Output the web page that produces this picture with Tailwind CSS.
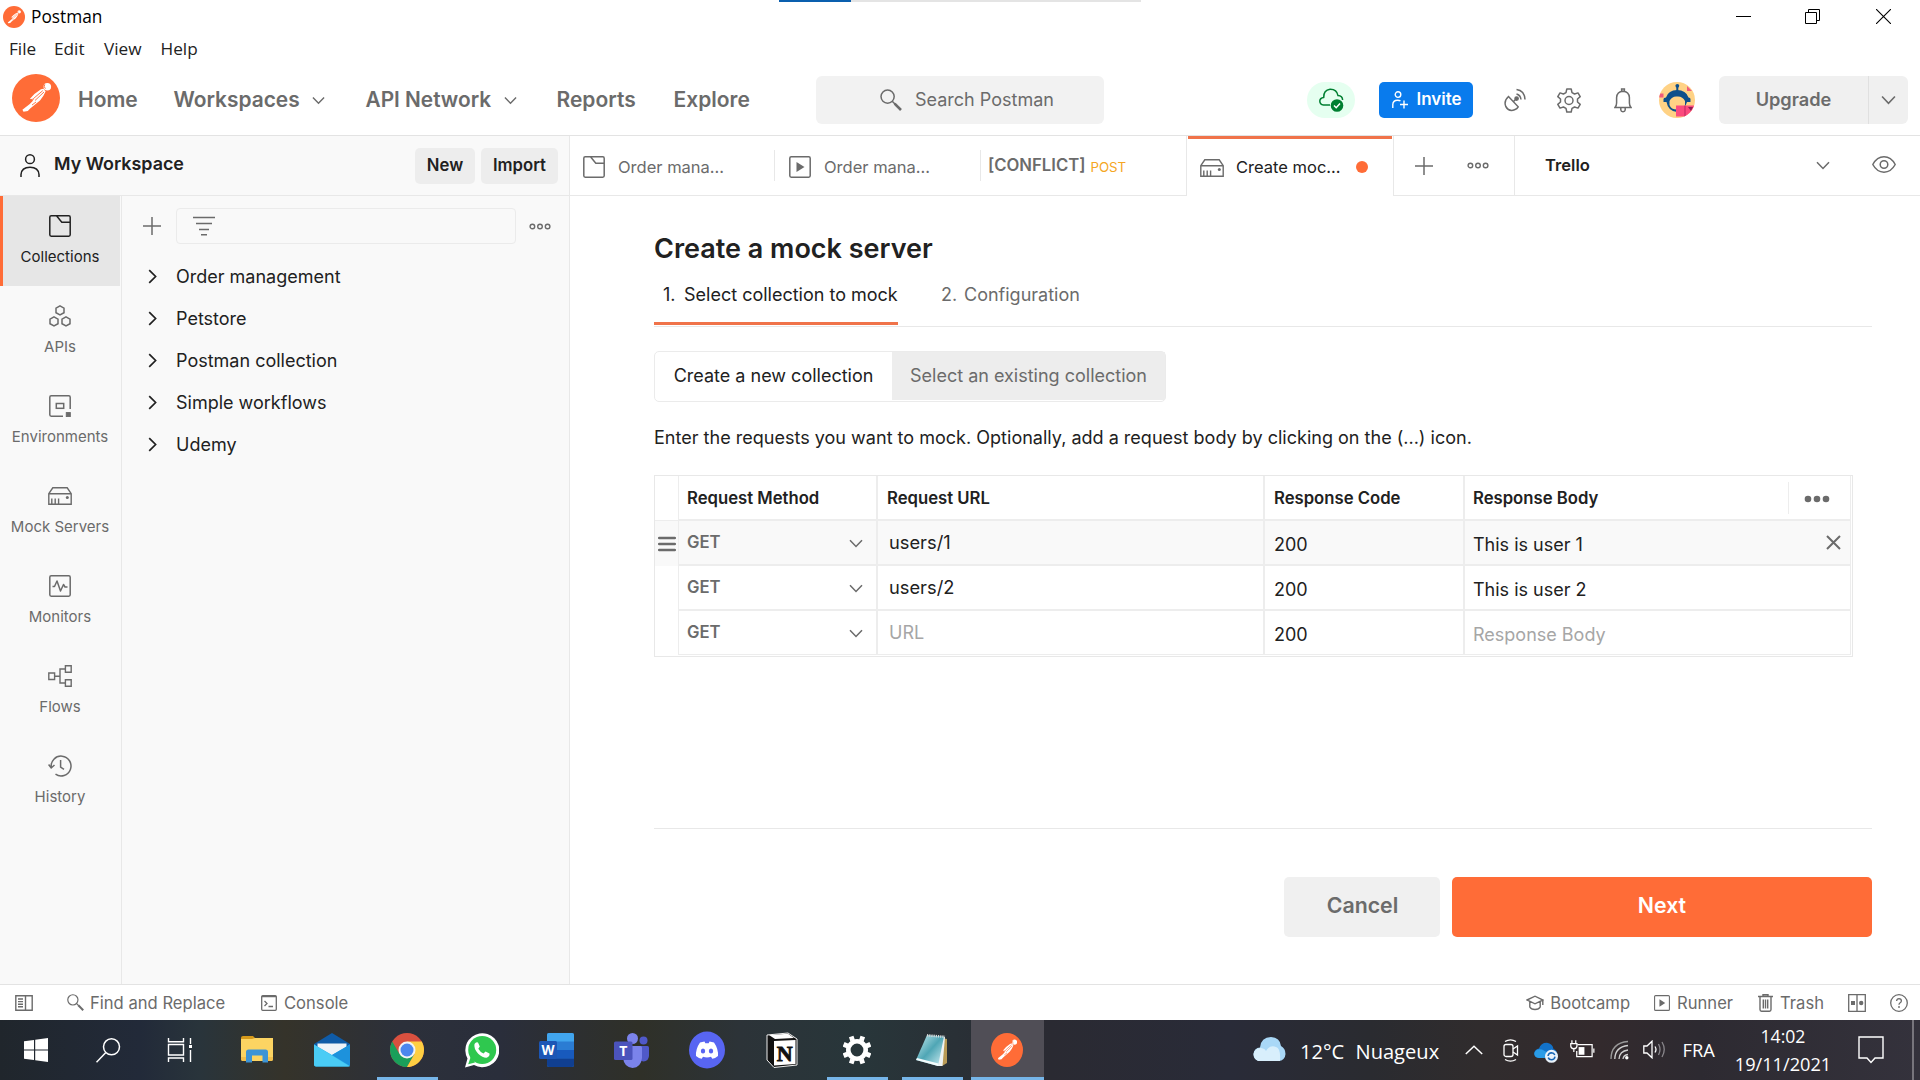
<!DOCTYPE html>
<html lang="en">
<head>
<meta charset="utf-8">
<title>Postman</title>
<script src="https://cdn.jsdelivr.net/npm/@tailwindcss/browser@4"></script>
</head>
<body class="w-[1920px] h-[1080px] overflow-hidden bg-white font-['Inter',sans-serif] text-[18px] text-[#212121] flex flex-col whitespace-nowrap">

<svg class="hidden">
  <symbol id="postman" viewBox="0 0 48 48">
    <circle cx="24" cy="24" r="24" fill="#ff6c37"/>
    <circle cx="35.3" cy="12.8" r="3.8" fill="#fff"/>
    <path d="M32.8 10.3a3.6 3.6 0 0 0 .6 4.4" stroke="#ff6c37" stroke-width=".9" fill="none"/>
    <path d="M31.5 14.8L29 15.2Q22.5 19 18 24.8L21.2 26.6L17.8 30L10.4 35.8L11.5 37.7L15.8 37L18.2 34.6L28 26.6Q31.6 22.4 33.6 17.6z" fill="#fff"/>
    <path d="M30.8 16.6L21.4 24.6M32 18L23 26.5M18.6 25.6l3.4-.6M20 31l4-3" stroke="#ff6c37" stroke-width=".9" fill="none"/>
  </symbol>
  <symbol id="chev" viewBox="0 0 14 9"><path d="M1 1.2L7 7.5L13 1.2" fill="none" stroke="currentColor" stroke-width="1.5"/></symbol>
  <symbol id="chevr" viewBox="0 0 9 15"><path d="M1.2 1.2L7.6 7.5L1.2 13.8" fill="none" stroke="currentColor" stroke-width="1.7"/></symbol>
  <symbol id="plus" viewBox="0 0 18 18"><path d="M9 0v18M0 9h18" stroke="currentColor" stroke-width="1.5"/></symbol>
  <symbol id="ooo" viewBox="0 0 22 7"><g fill="none" stroke="currentColor" stroke-width="1.4"><circle cx="3.4" cy="3.5" r="2.3"/><circle cx="11" cy="3.5" r="2.3"/><circle cx="18.6" cy="3.5" r="2.3"/></g></symbol>
  <symbol id="coll" viewBox="0 0 22 22"><path d="M2.2.8H19.8Q21.2.8 21.2 2.2V19.8Q21.2 21.2 19.8 21.2H2.2Q.8 21.2 .8 19.8V2.2Q.8.8 2.2.8zM7.5.8L12.8 7.2H21" fill="none" stroke="currentColor" stroke-width="1.5"/></symbol>
  <symbol id="play" viewBox="0 0 22 22"><rect x=".8" y=".8" width="20.4" height="20.4" rx="1.4" fill="none" stroke="currentColor" stroke-width="1.5"/><path d="M7.5 6v10l8-5z" fill="currentColor"/></symbol>
  <symbol id="server" viewBox="0 0 24 18"><path d="M.8 6.7L4.8.8H19.2L23.2 6.7V17.2H.8zM.8 6.7H23.2M3.8 11.5V17M7.2 11.5V17M10.6 11.5V17" fill="none" stroke="currentColor" stroke-width="1.4"/><circle cx="19.3" cy="10.4" r="1.5" fill="currentColor"/></symbol>
  <symbol id="lens" viewBox="0 0 22 22"><circle cx="7.6" cy="7.6" r="6.6" fill="none" stroke="currentColor" stroke-width="1.5"/><path d="M12.2 12.2L15 15" stroke="currentColor" stroke-width="1.5"/><path d="M14.6 14.6L21 21" stroke="currentColor" stroke-width="2.6"/></symbol>
</svg>

<!-- title bar -->
<div class="h-[33px] shrink-0 flex items-center relative font-['Open_Sans',sans-serif] text-[17.3px] text-black">
  <svg class="w-[22px] h-[22px] ml-[3px]"><use href="#postman"/></svg>
  <span class="ml-[6px] pt-px">Postman</span>
  <div class="absolute top-0 left-[779px] w-[362px] h-[2px] bg-[#e4e4e4]"><div class="w-[72px] h-[2px] bg-[#0a5fae]"></div></div>
  <div class="ml-auto mr-[29px] flex items-center gap-[54px]">
    <svg class="w-[15px] h-[15px]" viewBox="0 0 15 15"><path d="M0 7.5h15" stroke="#000"/></svg>
    <svg class="w-[15px] h-[15px]" viewBox="0 0 15 15" fill="none" stroke="#000"><path d="M.5 3.5h11v11h-11zM3.5 3.5v-3h11v11h-3"/></svg>
    <svg class="w-[15px] h-[15px] ml-[2px]" viewBox="0 0 15 15"><path d="M0 0L15 15M15 0L0 15" stroke="#000" stroke-width="1.1"/></svg>
  </div>
</div>
<!-- menu bar -->
<div class="h-[32px] shrink-0 flex items-center pl-[9px] font-['Open_Sans',sans-serif] text-[17.2px] text-[#222]">
  <span class="w-[45px]">File</span><span class="w-[50px]">Edit</span><span class="w-[56.500px]">View</span><span>Help</span>
</div>

<!-- main header -->
<header class="h-[71px] shrink-0 flex items-center border-b border-[#e3e3e3] text-[#6b6b6b] text-[21px] font-semibold [&>*]:shrink-0">
  <svg class="w-[48px] h-[48px] ml-[12px] -mt-[5px]"><use href="#postman"/></svg>
  <span class="ml-[18px] w-[95.500px]">Home</span>
  <span class="w-[138px] text-[20.900px]">Workspaces</span>
  <svg class="w-[13px] h-[9px]"><use href="#chev"/></svg>
  <span class="ml-[41px] w-[138px] text-[20.800px]">API Network</span>
  <svg class="w-[13px] h-[9px]"><use href="#chev"/></svg>
  <span class="ml-[40px] w-[117px]">Reports</span>
  <span class="w-[142.500px]">Explore</span>
  <div class="w-[288px] h-[48px] rounded-[6px] bg-[#f2f2f2] flex items-center pl-[64px] text-[18px] font-normal">
    <svg class="w-[22px] h-[22px]"><use href="#lens"/></svg>
    <span class="ml-[13px] -mt-[2px]">Search Postman</span>
  </div>
  <div class="ml-[203px] w-[48px] h-[36px] rounded-full bg-[#e5fff0] flex items-center justify-center">
    <svg class="w-[25px] h-[24px]" viewBox="0 0 25 24"><path d="M11 17H4.5Q.8 16.500 .8 13Q1 9.800 4.700 9.400Q4.500 2 11 1.200Q17.800 1 19 7.600Q23.500 8 23.600 12" fill="none" stroke="#007f31" stroke-width="1.5"/><circle cx="18" cy="17.500" r="6.300" fill="#007f31"/><path d="M15 17.500l2.200 2.200L21 15.500" fill="none" stroke="#fff" stroke-width="1.500"/></svg>
  </div>
  <div class="ml-[24px] w-[94px] h-[36px] rounded-[5px] bg-[#097bed] text-white text-[17px] flex items-center pl-[13px]">
    <svg class="w-[17px] h-[18px]" viewBox="0 0 17 18" fill="none" stroke="#fff" stroke-width="1.400"><circle cx="6" cy="3.600" r="2.800"/><path d="M.8 17V13.500Q1 9.200 5.500 9.200Q7.500 9.200 8.500 10M12 9.500v8M8 13.500h8"/></svg>
    <span class="ml-[7.500px]">Invite</span>
  </div>
  <svg class="ml-[31px] w-[22px] h-[24px]" viewBox="0 0 22 24" fill="none" stroke="currentColor" stroke-width="1.500"><path d="M4.500 8.500Q-.5 13 1.800 18.500Q5 24 10.500 21.800Q13.200 20.800 14.200 18.800zM9 14L12.500 10.500M12.500 6Q16.500 7 17 11.500M12.500 1.500Q20.500 2.500 21 11.500"/><circle cx="12.600" cy="10.600" r="1.600" fill="currentColor"/></svg>
  <svg class="ml-[31px] w-[24px] h-[25px]" viewBox="0 0 24 25" fill="none" stroke="currentColor" stroke-width="1.500" stroke-linejoin="round"><path d="M9.800 1H14.200L15 4.600L17.600 6L21 4.900L23.200 8.600L20.500 11V14L23.200 16.400L21 20.100L17.600 19L15 20.400L14.200 24H9.800L9 20.400L6.400 19L3 20.100L.8 16.400L3.500 14V11L.8 8.600L3 4.900L6.400 6L9 4.600z"/><circle cx="12" cy="12.500" r="4"/></svg>
  <svg class="ml-[33px] w-[18px] h-[25px]" viewBox="0 0 18 25" fill="none" stroke="currentColor" stroke-width="1.500"><path d="M1 19.500Q2.600 17.500 2.600 15V9.500Q3 3.500 9 3.200Q15 3.500 15.400 9.500V15Q15.400 17.500 17 19.500zM7.600 3V1H10.400V3M6.800 20V22Q7 23.800 9 23.800Q11 23.800 11.200 22V20"/></svg>
  <svg class="ml-[27px] w-[36px] h-[36px]" viewBox="0 0 36 36"><defs><clipPath id="av"><circle cx="18" cy="18" r="18"/></clipPath></defs><g clip-path="url(#av)"><rect width="36" height="36" fill="#ffd285"/><path d="M28 4L33 9H28z" fill="#f15a7c"/><rect x="0" y="11.500" width="4.500" height="4" fill="#f15a7c"/><circle cx="18.300" cy="3.800" r="1.900" fill="#0d4f8b"/><path d="M18.300 4v6" stroke="#0d4f8b" stroke-width="2"/><path d="M4.500 17Q4.500 15.500 7 15.500Q9.500 8 18 8Q27 8 29.500 15.500Q31.500 15.500 31.500 17V20H28L26 25Q23 30 18 30Q9 29 7.500 20H4.500z" fill="#0d4f8b"/><path d="M10.500 19Q13 14 18 14.500Q23.500 14 26 19V23Q24 27.500 18 27.500Q12 27.500 10.500 23z" fill="#ffd285"/><rect x="17" y="23.500" width="18" height="11" fill="#fb4b7e"/><path d="M26 24v11" stroke="#c92b63" stroke-width="1.200"/><path d="M29 25h5l-2 4z" fill="#8e1d55"/></g></svg>
  <div class="ml-[24px] w-[189px] h-[48px] rounded-[6px] bg-[#f0f0f0] flex items-center text-[18.200px]">
    <div class="w-[150px] h-full flex items-center justify-center border-r border-[#e0e0e0]">Upgrade</div>
    <svg class="ml-[12px] w-[15px] h-[10px]"><use href="#chev"/></svg>
  </div>
</header>

<!-- workspace and tab bar -->
<div class="h-[60px] shrink-0 flex text-[16.700px] text-[#6b6b6b] [&>*]:shrink-0">
  <div class="w-[570px] bg-[#f9f9f9] border-r border-b border-[#e8e8e8] flex items-center text-[#212121] font-semibold">
    <svg class="ml-[20px] w-[20px] h-[24px]" viewBox="0 0 20 24" fill="none" stroke="#212121" stroke-width="1.500"><circle cx="10" cy="5.200" r="4.400"/><path d="M1 23V20.500Q1.500 13.200 10 13.200Q18.500 13.200 19 20.500V23"/></svg>
    <span class="ml-[14px] -mt-[2px] text-[17.900px]">My Workspace</span>
    <span class="ml-auto w-[60px] h-[36px] rounded-[5px] bg-[#ededed] flex items-center justify-center">New</span>
    <span class="ml-[6px] mr-[11px] w-[77px] h-[36px] rounded-[5px] bg-[#ededed] flex items-center justify-center">Import</span>
  </div>
  <div class="w-[616px] border-b border-[#e8e8e8] flex items-center">
    <svg class="ml-[13px] w-[22px] h-[22px] mt-[3px]"><use href="#coll"/></svg>
    <span class="ml-[13px] w-[156px] mt-[4px] text-[16.500px]">Order mana...</span>
    <div class="w-px h-[31px] bg-[#e8e8e8]"></div>
    <svg class="ml-[14px] w-[22px] h-[22px] mt-[3px]"><use href="#play"/></svg>
    <span class="ml-[13px] w-[156px] mt-[4px] text-[16.500px]">Order mana...</span>
    <div class="w-px h-[31px] bg-[#e8e8e8]"></div>
    <span class="ml-[7px] font-semibold text-[16.700px]">[CONFLICT]</span>
    <span class="ml-[5px] mt-[4px] text-[13.300px] text-[#f5a623]">POST</span>
  </div>
  <div class="w-[208px] border-l border-r border-[#e8e8e8] flex items-center relative text-[#212121]">
    <div class="absolute top-0 left-[1px] w-[204px] h-[3px] bg-[#f0734a]"></div>
    <svg class="ml-[13px] w-[24px] h-[18px] mt-[3px] text-[#6b6b6b]"><use href="#server"/></svg>
    <span class="ml-[12px] w-[120px] mt-[3px] text-[16.500px]">Create moc...</span>
    <div class="w-[12px] h-[12px] mt-[2px] rounded-full bg-[#ff6c37]"></div>
  </div>
  <div class="w-[121px] border-r border-b border-[#e8e8e8] flex items-center">
    <svg class="ml-[21px] w-[18px] h-[18px]"><use href="#plus"/></svg>
    <svg class="ml-[34px] w-[22px] h-[7px]"><use href="#ooo"/></svg>
  </div>
  <div class="w-[405px] border-b border-[#e8e8e8] flex items-center">
    <span class="ml-[30px] text-[16.600px] font-semibold text-[#212121]">Trello</span>
    <svg class="ml-auto w-[14px] h-[9px]"><use href="#chev"/></svg>
    <svg class="ml-[42px] mr-[24px] -mt-[2px] w-[24px] h-[17px]" viewBox="0 0 24 17" fill="none" stroke="currentColor" stroke-width="1.500"><path d="M.8 8.500Q5 .8 12 .8Q19 .8 23.200 8.500Q19 16.200 12 16.200Q5 16.200 .8 8.500z"/><circle cx="12" cy="8.500" r="3.800"/></svg>
  </div>
</div>

<!-- body -->
<div class="h-[788px] shrink-0 flex">
  <nav class="w-[122px] bg-[#f9f9f9] border-r border-[#e8e8e8] text-[15px] text-[#6b6b6b] [&>div]:w-[120px] [&>div]:h-[90px] [&>div]:flex [&>div]:flex-col [&>div]:items-center [&>div>svg]:h-[22px] [&>div>svg]:mt-[19px] [&>div>span]:mt-[9px]">
    <div class="bg-[#e6e6e6] text-[#212121] relative"><i class="absolute left-0 top-0 w-[3px] h-full bg-[#ff6c37]"></i><svg class="w-[22px]"><use href="#coll"/></svg><span>Collections</span></div>
    <div><svg class="w-[22px]" viewBox="0 0 22 22" fill="none" stroke="currentColor" stroke-width="1.500"><path d="M11 .9L15 3.100V7.700L11 9.900L7 7.700V3.100z"/><path d="M5 11.900L9 14.100V18.700L5 20.900L1 18.700V14.100zM17 11.900L21 14.100V18.700L17 20.900L13 18.700V14.100z"/></svg><span>APIs</span></div>
    <div><svg class="w-[22px]" viewBox="0 0 22 22" fill="none" stroke="currentColor" stroke-width="1.500"><path d="M21.200 14V2.200Q21.200.8 19.800.8H2.200Q.8.8 .8 2.200V19.800Q.8 21.200 2.200 21.200H14"/><rect x="7.300" y="8.500" width="7.400" height="4.800"/><rect x="17.300" y="17.600" width="4" height="4" fill="currentColor" stroke-width="1"/></svg><span>Environments</span></div>
    <div><svg class="w-[24px]"><use href="#server"/></svg><span>Mock Servers</span></div>
    <div><svg class="w-[22px]" viewBox="0 0 22 22" fill="none" stroke="currentColor" stroke-width="1.500"><rect x=".8" y=".8" width="20.400" height="20.400" rx="1.400"/><path d="M3.500 11.500H5.500L8 6L11.500 16L14.500 9.500L16 12H18.500" stroke-linejoin="round"/></svg><span>Monitors</span></div>
    <div><svg class="w-[24px]" viewBox="0 0 24 22" fill="none" stroke="currentColor" stroke-width="1.400"><path d="M.8 8H6.600V14.500H.8zM17.400.8H23.200V7.300H17.400zM17.400 14.800H23.200V21.300H17.400zM6.600 11.300H12M17.400 4H12V18H17.400"/></svg><span>Flows</span></div>
    <div><svg class="w-[24px]" viewBox="0 0 24 22" fill="none" stroke="currentColor" stroke-width="1.500"><path d="M3.300 12.500A9.900 9.900 0 1 1 7.500 19.200M.6 9.500L3.200 13L6.500 10M12.600 5V12L16 14.300"/></svg><span>History</span></div>
  </nav>
  <aside class="w-[448px] bg-[#f9f9f9] border-r border-[#e8e8e8]">
    <div class="mt-[12px] h-[36px] flex items-center text-[#6b6b6b]">
      <svg class="ml-[21px] w-[18px] h-[18px]"><use href="#plus"/></svg>
      <div class="ml-[15px] w-[340px] h-[36px] border border-[#ebebeb] rounded-[4px] flex items-center">
        <svg class="ml-[16px] w-[22px] h-[20px]" viewBox="0 0 22 20" stroke="currentColor" stroke-width="1.500"><path d="M0 1.500H22M3 7.500H19M6 13.500H16M8 18.800H14"/></svg>
      </div>
      <svg class="ml-[13px] w-[22px] h-[7px]"><use href="#ooo"/></svg>
    </div>
    <div class="mt-[11px] [&>div]:h-[42px] [&>div]:flex [&>div]:items-center [&>div]:gap-[19px] [&>div]:pl-[26px] [&_svg]:w-[9px] [&_svg]:h-[15px]">
      <div><svg><use href="#chevr"/></svg>Order management</div>
      <div><svg><use href="#chevr"/></svg>Petstore</div>
      <div><svg><use href="#chevr"/></svg>Postman collection</div>
      <div><svg><use href="#chevr"/></svg>Simple workflows</div>
      <div><svg><use href="#chevr"/></svg>Udemy</div>
    </div>
  </aside>

  <main class="w-[1350px] pl-[84px] pr-[48px]">
    <h1 class="mt-[33px] h-[39px] leading-[40px] text-[27px] font-semibold">Create a mock server</h1>
    <div class="h-[59px] border-b border-[#e8e8e8] flex leading-[53px]">
      <div class="w-[244px] h-[57px] border-b-[3px] border-[#f0734a] pl-[9px]"><span class="inline-block w-[21px]">1.</span>Select collection to mock</div>
      <div class="ml-[43px] text-[#6b6b6b]"><span class="inline-block w-[23px]">2.</span>Configuration</div>
    </div>
    <div class="mt-[24px] w-[512px] h-[51px] border border-[#ebebeb] rounded-[5px] flex bg-white leading-[48px]">
      <div class="w-[237px] text-center">Create a new collection</div>
      <div class="w-[273px] h-[48px] bg-[#ededed] text-[#6b6b6b] text-center">Select an existing collection</div>
    </div>
    <p class="mt-[22px] h-[29px] leading-[28px] text-[18.040px]">Enter the requests you want to mock. Optionally, add a request body by clicking on the (...) icon.</p>

    <!-- request table -->
    <div class="mt-[22px] w-[1199px] h-[182px] border border-[#e8e8e8] [&>div]:flex [&>div]:h-[45px] [&>div]:w-[1196px] [&>div>*]:shrink-0 [&>div>*]:flex [&>div>*]:items-center [&>div>*]:border-[#ededed]">
      <div class="text-[16.700px] font-semibold">
        <div class="w-[24px] border-r border-b"></div>
        <div class="w-[199px] border-r-2 border-b-2 pl-[8px] pt-[2px]">Request Method</div>
        <div class="w-[387px] border-r-2 border-b-2 pl-[9px] pt-[2px]">Request URL</div>
        <div class="w-[200px] border-r-2 border-b-2 pl-[9px] pt-[2px]">Response Code</div>
        <div class="w-[386px] border-r border-b-2 pl-[8px]"><span class="pt-[2px]">Response Body</span>
          <div class="ml-auto w-[62px] h-[32px] border-l border-[#ededed] flex items-center pl-[15px]"><svg class="w-[26px] h-[8px] mt-[2px]" viewBox="0 0 26 8" fill="#6b6b6b"><circle cx="4" cy="4" r="3.300"/><circle cx="13" cy="4" r="3.300"/><circle cx="22" cy="4" r="3.300"/></svg></div>
        </div>
      </div>
      <div class="bg-[#f9f9f9]">
        <div class="w-[24px] border-r pl-[3px]"><svg class="w-[18px] h-[16px]" viewBox="0 0 18 16"><path d="M1.200 2H16.800M1.200 8H16.800M1.200 14H16.800" stroke="#6b6b6b" stroke-width="2.600" stroke-linecap="round"/></svg></div>
        <div class="w-[199px] border-r-2 border-b-2 pl-[8px] pt-[1px] text-[16.700px] font-semibold text-[#6b6b6b]">GET<svg class="ml-auto mr-[13px] w-[14px] h-[9px]"><use href="#chev"/></svg></div>
        <div class="w-[387px] border-r-2 border-b-2 pl-[11px] text-[18.300px]">users/1</div>
        <div class="w-[200px] border-r-2 border-b-2 pl-[9px] pt-[4px]">200</div>
        <div class="w-[386px] border-r border-b-2 pl-[8px]"><span class="pt-[4px]">This is user 1</span><svg class="ml-auto mr-[9px] w-[15px] h-[15px]" viewBox="0 0 15 15"><path d="M1 1L14 14M14 1L1 14" stroke="#6b6b6b" stroke-width="2"/></svg></div>
      </div>
      <div>
        <div class="w-[24px] border-r"></div>
        <div class="w-[199px] border-r-2 border-b-2 pl-[8px] pt-[1px] text-[16.700px] font-semibold text-[#6b6b6b]">GET<svg class="ml-auto mr-[13px] w-[14px] h-[9px]"><use href="#chev"/></svg></div>
        <div class="w-[387px] border-r-2 border-b-2 pl-[11px] text-[18.300px]">users/2</div>
        <div class="w-[200px] border-r-2 border-b-2 pl-[9px] pt-[4px]">200</div>
        <div class="w-[386px] border-r border-b-2 pl-[8px] pt-[4px]">This is user 2</div>
      </div>
      <div class="!h-[44px]">
        <div class="w-[24px] border-r"></div>
        <div class="w-[199px] border-r-2 border-b pl-[8px] pt-[1px] text-[16.700px] font-semibold text-[#6b6b6b]">GET<svg class="ml-auto mr-[13px] w-[14px] h-[9px]"><use href="#chev"/></svg></div>
        <div class="w-[387px] border-r-2 border-b pl-[11px] text-[#a6a6a6]">URL</div>
        <div class="w-[200px] border-r-2 border-b pl-[9px] pt-[4px]">200</div>
        <div class="w-[386px] border-r border-b pl-[8px] pt-[4px] text-[#a6a6a6]">Response Body</div>
      </div>
    </div>

    <div class="mt-[171px] border-t border-[#e8e8e8] pt-[48px] flex justify-end gap-[12px] text-[21.300px] font-semibold">
      <div class="w-[156px] h-[60px] rounded-[5px] bg-[#f0f0f0] text-[#6b6b6b] flex items-center justify-center pl-px pb-[2px]">Cancel</div>
      <div class="w-[420px] h-[60px] rounded-[5px] bg-[#ff6c37] text-white flex items-center justify-center pb-[2px]">Next</div>
    </div>
  </main>
</div>

<!-- status bar -->
<footer class="h-[36px] shrink-0 border-t border-[#e3e3e3] flex items-center text-[16.600px] text-[#6b6b6b] pr-[12px] [&>span]:pt-[2px]">
  <svg class="ml-[15px] w-[18px] h-[16px]" viewBox="0 0 18 16" fill="none" stroke="currentColor" stroke-width="1.400"><path d="M.8.8H17.200V15.200H.8zM10.500.8V15.200M3 4H8M3 6.600H8M3 9.200H8M3 11.800H8"/></svg>
  <svg class="ml-[34px] w-[17px] h-[17px]"><use href="#lens"/></svg>
  <span class="ml-[6px] w-[134px]">Find and Replace</span>
  <svg class="ml-[37px] w-[16px] h-[16px]" viewBox="0 0 16 16" fill="none" stroke="currentColor" stroke-width="1.300"><rect x=".7" y=".7" width="14.600" height="14.600" rx="1"/><path d="M.7 1.700H15.300M3.500 6L6 8.500L3.500 11M7.500 11.500H12"/></svg>
  <span class="ml-[7px]">Console</span>
  <svg class="ml-auto w-[18px] h-[16px]" viewBox="0 0 18 16" fill="none" stroke="currentColor" stroke-width="1.400"><path d="M1 5L9 1.200L17 5L9 8.800zM3.800 6.500V12Q5 14.500 9 14.500Q13 14.500 14.200 12V6.500M16.800 5V10"/></svg>
  <span class="ml-[6px]">Bootcamp</span>
  <svg class="ml-[24px] w-[16px] h-[16px]"><use href="#play"/></svg>
  <span class="ml-[7px]">Runner</span>
  <svg class="ml-[25px] w-[15px] h-[18px]" viewBox="0 0 15 18" fill="none" stroke="currentColor" stroke-width="1.400"><path d="M0 2.500H15M5 2.500V.8H10V2.500M2 2.500V15.500Q2 17.200 3.500 17.200H11.500Q13 17.200 13 15.500V2.500M5.300 5.500V14.500M7.500 5.500V14.500M9.700 5.500V14.500"/></svg>
  <span class="ml-[7px]">Trash</span>
  <svg class="ml-[24px] w-[18px] h-[18px]" viewBox="0 0 18 18" fill="none" stroke="currentColor" stroke-width="1.300"><path d="M.7.7H17.300V17.300H.7zM9 .7V17.300"/><rect x="3" y="7" width="4" height="4" fill="currentColor" stroke="none"/><circle cx="13.200" cy="9" r="2.200" fill="currentColor" stroke="none"/></svg>
  <svg class="ml-[24px] w-[18px] h-[18px]" viewBox="0 0 18 18" fill="none" stroke="currentColor" stroke-width="1.300"><circle cx="9" cy="9" r="8.300"/><path d="M6.600 7Q6.800 4.700 9 4.700Q11.400 4.800 11.400 7Q11.200 8.300 9.900 9Q9 9.600 9 10.800"/><circle cx="9" cy="13" r=".9" fill="currentColor" stroke="none"/></svg>
</footer>

<!-- taskbar -->
<div class="h-[60px] shrink-0 flex text-white font-['Open_Sans',sans-serif] bg-[linear-gradient(90deg,#20262c_0px,#222a39_140px,#29343b_200px,#35332a_285px,#2c303a_400px,#2a2e3b_500px,#2f3028_640px,#2c3338_740px,#28363a_860px,#2a2a32_1050px,#292b38_1230px,#2a2b30_1370px,#302c2d_1480px,#332a2d_1600px,#2d2a31_1700px,#34323c_1920px)] [&>*]:shrink-0">
  <div class="w-[219px] flex items-center">
    <svg class="ml-[24px] w-[24px] h-[24px]" viewBox="0 0 24 24" fill="#fff"><path d="M0 3.300L10 1.900V11.400H0zM11.200 1.700L24 0V11.400H11.200zM0 12.600H10V22.100L0 20.700zM11.200 12.600H24V24L11.200 22.300z"/></svg>
    <svg class="ml-[48px] w-[25px] h-[25px]" viewBox="0 0 25 25" fill="none" stroke="#fff" stroke-width="1.500"><circle cx="15.500" cy="8.800" r="8"/><path d="M9.600 14.700L.5 24.300"/></svg>
    <svg class="ml-[46px] w-[26px] h-[24px]" viewBox="0 0 26 24" fill="none" stroke="#fff" stroke-width="1.400"><path d="M1.500 0V3.700H16.500V0M1.500 6.500H16.500V17H1.500zM1.500 24V20H16.500V24M23.500 0V6M23.500 12V24"/><rect x="22" y="7" width="3" height="3" fill="#fff" stroke="none"/></svg>
  </div>
  <div class="flex [&>div]:w-[75px] [&>div]:flex [&>div]:items-center [&>div]:justify-center [&>div]:relative">
    <div><svg class="w-[34px] h-[30px]" viewBox="0 0 34 30"><path d="M1 3Q1 1 3 1H13L16 4H1z" fill="#d69a1b"/><path d="M1 4H12L15 3H33V24Q33 26 31 26H3Q1 26 1 24z" fill="#fcd462"/><path d="M6 27.500V17Q6 14.500 8.500 14.500H25.500Q28 14.500 28 17V27.500H22.500V20.500H12V27.500z" fill="#3d94d6"/><path d="M1 22V24Q1 26 3 26H6V22zM28 22V26H31Q33 26 33 24V22z" fill="#f3c04c"/></svg></div>
    <div><svg class="w-[36px] h-[34px]" viewBox="0 0 36 34"><path d="M0 11L18 0L36 11V20H0z" fill="#0f5ba7"/><path d="M3.500 10.500H32.500V20L18 27L3.500 18z" fill="#eef3f8"/><path d="M0 11.500L18 22L36 11.500V31.500Q36 33.500 34 33.500H2Q0 33.500 0 31.500z" fill="#2bb3ee"/><path d="M36 11.500L18 22L36 33z" fill="#1d92dc"/><path d="M0 11.500L36 33.500H2Q0 33.500 0 31.500z" fill="#4accf5"/></svg></div>
    <div><svg class="w-[34px] h-[34px]" viewBox="0 0 34 34"><circle cx="17" cy="17" r="17" fill="#d9503f"/><path d="M2.280 8.500A17 17 0 0 0 17 34L24.360 21.250L17 17L9.640 21.250z" fill="#1a9f5a"/><path d="M31.720 8.500A17 17 0 0 1 17 34L24.360 21.250L17 8.500z" fill="#ffcf42"/><circle cx="17" cy="17" r="8.500" fill="#f3f3f3"/><circle cx="17" cy="17" r="6.500" fill="#4b87ee"/></svg><i class="absolute bottom-0 left-[8px] w-[61px] h-[3px] bg-[#76b5e8]"></i></div>
    <div><svg class="w-[34px] h-[35px]" viewBox="0 0 34 35"><path d="M0 34.500L2.500 25.500A17 17 0 1 1 9 32z" fill="#fff"/><circle cx="17.200" cy="17" r="14" fill="#2fc84f"/><path d="M3.200 31.300L6 23L10 29.500z" fill="#2fc84f"/><path d="M9.500 11Q11 8.500 13 9.500L14.800 13.500L13.300 15.800Q15 19 18.500 20.500L20.500 18.500L24.500 20.500Q25 23.500 21.500 24.700Q18 25 13.200 20.800Q8.500 15.500 9.500 11z" fill="#fff"/></svg></div>
    <div><svg class="w-[35px] h-[34px]" viewBox="0 0 35 34"><rect x="8" y="0" width="27" height="34" rx="2" fill="#2b7cd3"/><path d="M8 8.500V2Q8 0 10 0H33Q35 0 35 2V8.500z" fill="#41a5ee"/><path d="M8 17H35V25.500H8z" fill="#185abd"/><path d="M8 25.500H35V32Q35 34 33 34H10Q8 34 8 32z" fill="#103f91"/><rect x="0" y="8" width="18" height="18" rx="1.500" fill="#1c56b5"/><text x="9" y="22" font-size="13.500" font-weight="700" font-family="Open Sans" fill="#fff" text-anchor="middle">W</text></svg></div>
    <div><svg class="w-[35px] h-[35px]" viewBox="0 0 35 35"><circle cx="18.500" cy="5.500" r="5.500" fill="#7b83eb"/><circle cx="29.500" cy="7.500" r="4" fill="#5059c9"/><path d="M24 13H33.500Q35 13 35 14.500V23Q34.500 28 29.500 28.500Q25 28 24 24z" fill="#5059c9"/><path d="M10 13H26.500Q28 13 28 14.500V25Q27 34.500 18.500 35Q10 34 9 25z" fill="#7b83eb"/><rect x="0" y="8.500" width="18.500" height="18.500" rx="1.500" fill="#4b53bc"/><text x="9.200" y="23" font-size="14" font-weight="700" font-family="Open Sans" fill="#fff" text-anchor="middle">T</text></svg></div>
    <div><svg class="w-[36px] h-[38px]" viewBox="0 0 36 38"><ellipse cx="18" cy="19" rx="18" ry="18.500" fill="#5865f2"/><path d="M11 11.500L15.500 10.500L16.300 12.200H19.700L20.500 10.500L25 11.500Q29.500 18 29 25Q26 27.500 23.300 27.800L22 25.800Q18 27 14 25.800L12.700 27.800Q10 27.500 7 25Q6.500 18 11 11.500z" fill="#fff"/><ellipse cx="14" cy="20" rx="2.200" ry="2.500" fill="#5865f2"/><ellipse cx="22" cy="20" rx="2.200" ry="2.500" fill="#5865f2"/></svg></div>
    <div><svg class="w-[32px] h-[36px]" viewBox="0 0 32 36"><path d="M1 3L22 1L31 7V33L8 35.500L1 28z" fill="#111" stroke="#eee" stroke-width="1"/><path d="M3 3L22 1.800L28 6L9 7z" fill="#fff"/><path d="M8 9L29.500 8V32L8 33.500z" fill="#fff"/><text x="18.800" y="28.500" font-size="22" font-weight="700" font-family="Liberation Serif" fill="#111" stroke="#111" stroke-width=".8" text-anchor="middle">N</text></svg></div>
    <div><svg class="w-[28px] h-[30px]" viewBox="0 0 28 30"><circle cx="14" cy="15" r="8.700" fill="none" stroke="#fff" stroke-width="4.600"/><g stroke="#fff" stroke-width="4.800"><path d="M9.600 5.500L8.200 1.500M18.400 5.500L19.800 1.500M9.600 24.500L8.200 28.500M18.400 24.500L19.800 28.500M4.600 11L.6 9.300M4.600 19L.6 20.700M23.400 11L27.400 9.300M23.400 19L27.400 20.700"/></g></svg><i class="absolute bottom-0 left-[8px] w-[61px] h-[3px] bg-[#76b5e8]"></i></div>
    <div><svg class="w-[34px] h-[34px]" viewBox="0 0 34 34"><defs><linearGradient id="np" x1="0" y1="0" x2="1" y2="1"><stop offset="0" stop-color="#c9ecf0"/><stop offset=".5" stop-color="#4fa6b5"/><stop offset="1" stop-color="#d4f0f5"/></linearGradient></defs><path d="M27 5L32 6V30L27 33z" fill="#b89a56"/><path d="M12 3L30 4L27.500 33L23 33z" fill="#eef3f4"/><path d="M12 2L29 3.500L23 33L1 27z" fill="url(#np)"/><path d="M1 27L23 33L23.600 30.500L2 25z" fill="#f4fbfc"/><path d="M12 2.300L30 3.800" stroke="#d8d8d8" stroke-width="2.500" stroke-dasharray="1.200 1"/></svg><i class="absolute bottom-0 left-[8px] w-[61px] h-[3px] bg-[#76b5e8]"></i></div>
    <div><div class="absolute inset-y-0 left-[2px] w-[73px] bg-[#504e56]"></div><svg class="w-[32px] h-[34px] relative" viewBox="0 0 48 48" preserveAspectRatio="none"><use href="#postman"/></svg><i class="absolute bottom-0 left-[2px] w-[73px] h-[3px] bg-[#76b5e8]"></i></div>
  </div>

  <div class="ml-auto w-[876px] flex items-center [&>*]:shrink-0">
    <svg class="ml-[209px] w-[33px] h-[26px] -mt-[3px]" viewBox="0 0 33 26"><path d="M7 25Q.5 24 .5 18Q1 12 7 11.500Q8 1 18 1Q27 1.500 28 10Q32.500 12.500 32.500 18Q32 24.500 25.500 25z" fill="#a9d8f7"/><path d="M5 25Q.5 23 .5 18Q2 11.500 8 12Q12 12.500 13 15Q17 8.500 23 11Q28 12.500 27 25z" fill="#d8effc"/></svg>
    <span class="ml-[14px] w-[55.500px] text-[20.100px] pt-[5px]">12°C</span>
    <span class="w-[110px] text-[20.100px] pt-[5px]">Nuageux</span>
    <svg class="-ml-[1px] w-[18px] h-[10px]" viewBox="0 0 18 10" fill="none" stroke="#fff" stroke-width="1.500"><path d="M.8 9L9 1.200L17.200 9"/></svg>
    <svg class="ml-[20px] w-[16px] h-[23px]" viewBox="0 0 16 23" fill="none" stroke="#fff" stroke-width="1.300"><rect x="1" y="5.500" width="9" height="12" rx="2"/><path d="M10 10L14.500 7V16L10 13M2 2.500Q7.500-.8 13 2.500M2 20.500Q7.500 23.800 13 20.500"/></svg>
    <svg class="ml-[15px] mt-[4px] w-[25px] h-[21px]" viewBox="0 0 25 21"><path d="M5 16Q0 15.500 .3 11Q1 7 5 6.500Q7 .5 13 .7Q18.500 1.500 19.500 7Q24 8.500 23 14L20 16z" fill="#1272c9"/><path d="M5 16Q0 15.500 .3 11Q2 6 8 7.500L17 12.500L14 16z" fill="#2a9be6"/><circle cx="17.500" cy="14.300" r="6.500" fill="#e9f2fa"/><path d="M14 14Q14.500 10.800 17.500 10.800Q20 11 20.800 13M21 14.600Q20.500 17.800 17.500 17.800Q15 17.600 14.200 15.600" fill="none" stroke="#1464b4" stroke-width="1.500"/></svg>
    <svg class="ml-[11px] w-[25px] h-[18px] -mt-[2px]" viewBox="0 0 26 18" fill="none" stroke="#fff" stroke-width="1.300"><path d="M8 4.500H23V17H7V11M24.800 8.500V13M2 0V3M6 0V3M.8 3.500H7.200V6Q7 8.500 4 8.700Q1 8.500 .8 6zM4 9V12"/><rect x="9" y="7" width="6" height="8" fill="#fff" stroke="none"/></svg>
    <svg class="ml-[15px] w-[19px] h-[20px]" viewBox="0 0 19 20" fill="none" stroke="#d0d0d0" stroke-width="1.300"><path d="M1 19Q1 3 18 1.500" stroke="#999"/><path d="M4.800 19Q5 7 18 5.500M9 19Q9.500 11 18 10M13 19Q13.500 15 18 14.500"/><circle cx="16.800" cy="17.800" r="1.700" fill="#fff" stroke="none"/></svg>
    <svg class="ml-[14px] w-[23px] h-[19px] -mt-px" viewBox="0 0 23 19" fill="none" stroke="#fff" stroke-width="1.300"><path d="M.8 6H4L9 1.200V17.800L4 13H.8zM12 6.500Q14 9.500 12 12.500"/><path d="M15.500 4Q18.500 9.500 15.500 15M19 2Q23.500 9.500 19 17" stroke="#8a878c"/></svg>
    <span class="ml-[17px] w-[53px] text-[18.300px]">FRA</span>
    <div class="w-[95px] text-[18.200px] leading-[28px] text-center flex flex-col items-center"><span class="text-[17.600px]">14:02</span><span>19/11/2021</span></div>
    <svg class="ml-[27px] w-[26px] h-[28px]" viewBox="0 0 26 28" fill="none" stroke="#fff" stroke-width="1.400"><path d="M1 1H25V22H17L13 26.500L9 22H1z"/></svg>
    <div class="ml-auto mr-[6px] w-[2px] h-full bg-[#77757c]"></div>
  </div>
</div>
</body>
</html>
